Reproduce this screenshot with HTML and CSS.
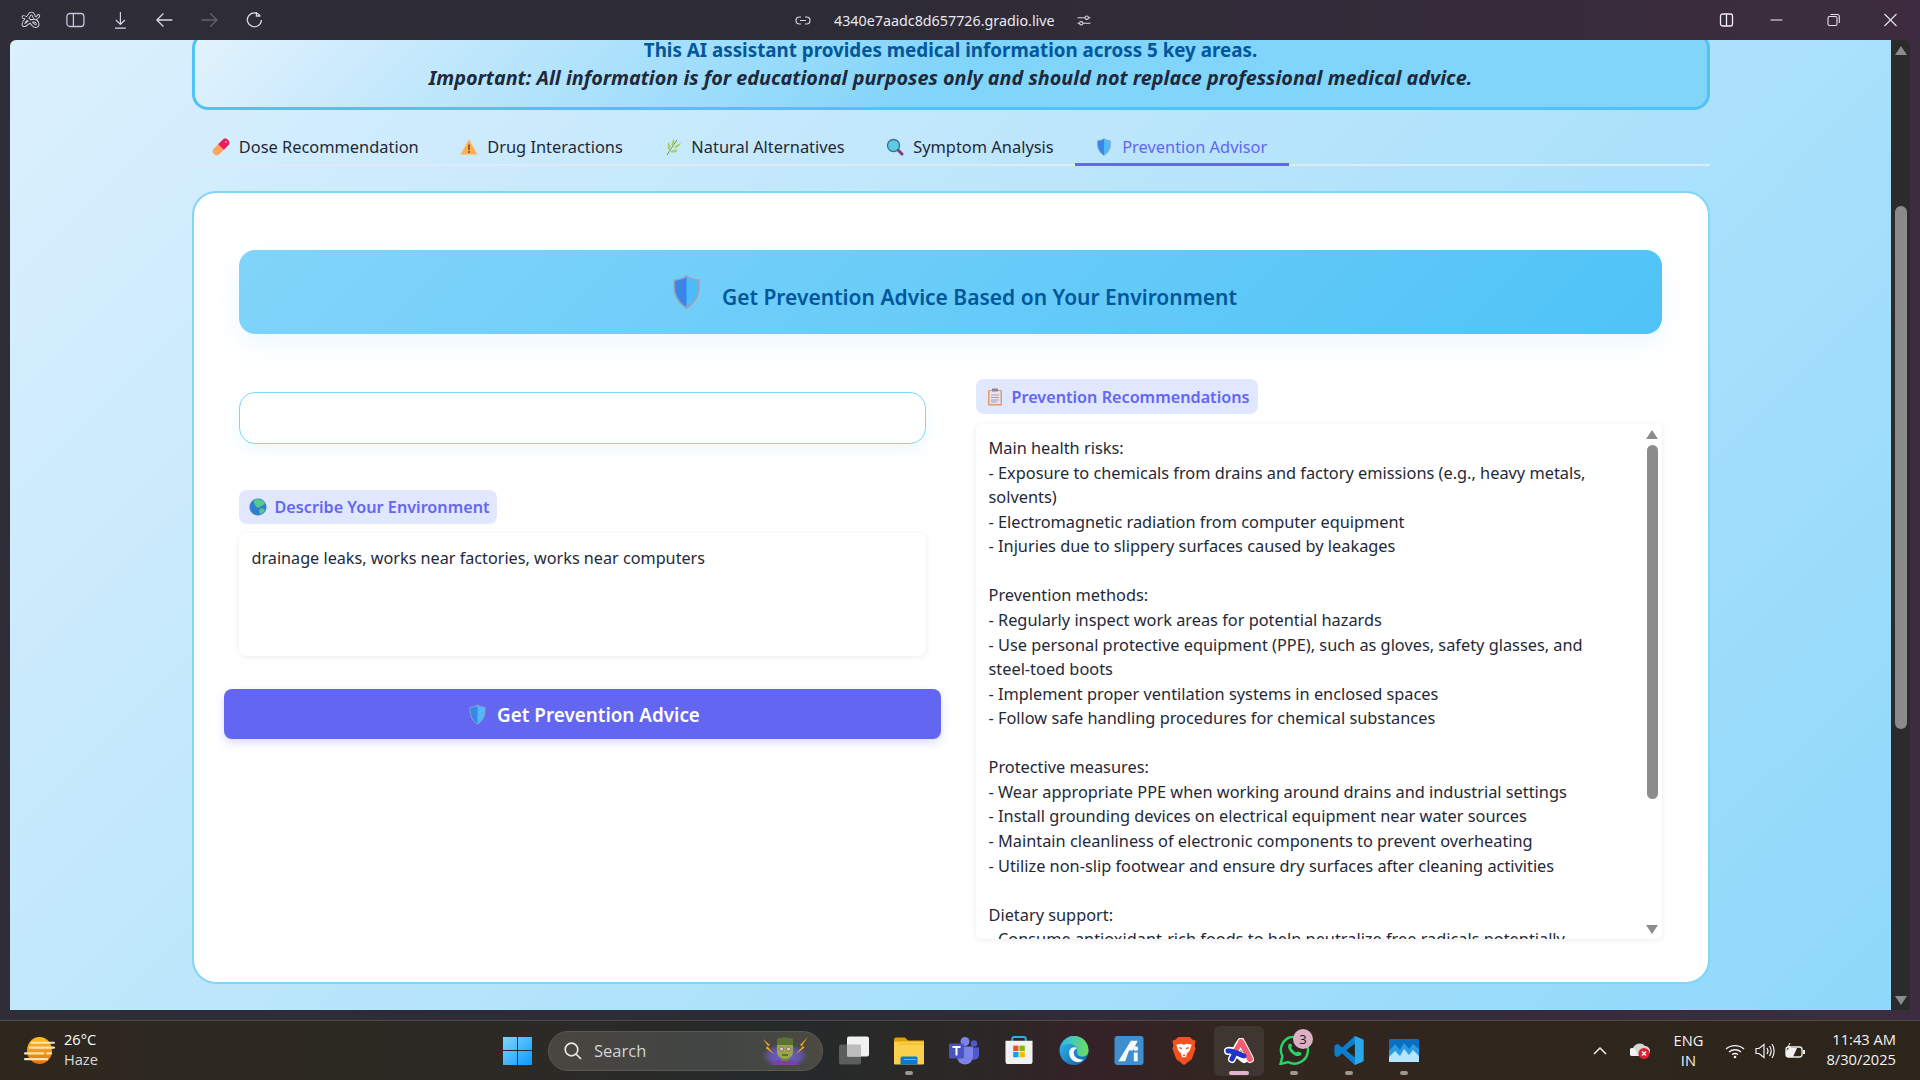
FILE: index.html
```html
<!DOCTYPE html>
<html lang="en">
<head>
    <meta charset="UTF-8"/>
    <title>Prevention Advisor</title>
    <link rel="stylesheet" href="styles.css">
</head>
<body>
<svg class="defs" width="0" height="0">
    <symbol id="shield" viewBox="0 0 28 34">
        <path d="M14 1C17 3.500 21 5 26 5C27.500 15 25 26 14 33C3 26 .5 15 2 5C7 5 11 3.500 14 1Z" fill="#4dbbfb" stroke="#9aa0b4" stroke-width="1.500"/>
        <path d="M14 2C11 4.200 7 5.500 2.800 5.700C1.500 15 3.800 25.500 14 32Z" fill="#3a86e8"/>
    </symbol>
</svg>

<header class="titlebar">
    <div class="bar-left">
        <svg class="bar-icon" viewBox="0 0 20 18" fill="none" stroke-linecap="round">
            <path d="M3 6C7 6 10 11 13 14C15 16 18 15 17 12C16 9 12 9 9 11C6 13 3 16 3 13C3 10 7 8 9 4C10 2 12 2 13 4C14 7 15 9 18 5" stroke="#dfe0ea" stroke-width="3.600"/>
            <path d="M3 6C7 6 10 11 13 14C15 16 18 15 17 12C16 9 12 9 9 11C6 13 3 16 3 13C3 10 7 8 9 4C10 2 12 2 13 4C14 7 15 9 18 5" stroke="#2e2d38" stroke-width="1.800"/>
        </svg>
        <svg class="bar-icon" viewBox="0 0 20 18" fill="none" stroke="#c4c7dc" stroke-width="1.300"><rect x="1.500" y="2.500" width="17" height="13" rx="3"/><path d="M8 2.500V15.500"/></svg>
        <svg class="bar-icon" viewBox="0 0 20 20" fill="none" stroke="#d6d8e8" stroke-width="1.300"><path d="M10 1V15M5 10L10 15L15 10M4 19H16"/></svg>
        <svg class="bar-icon" viewBox="0 0 20 18" fill="none" stroke="#d6d8e8" stroke-width="1.300"><path d="M18 9H3M9 2.500L2.500 9L9 15.500"/></svg>
        <svg class="bar-icon" viewBox="0 0 20 18" fill="none" stroke="#62636e" stroke-width="1.300"><path d="M2 9H17M11 2.500L17.500 9L11 15.500"/></svg>
        <svg class="bar-icon" viewBox="0 0 20 18" fill="none" stroke="#d6d8e8" stroke-width="1.300"><path d="M15.500 4.500A7 7 0 1 0 17 9M12 1V5H16"/></svg>
    </div>
    <div class="bar-url">
        <svg class="url-icon" viewBox="0 0 16 12" fill="none" stroke="#d6d8e8" stroke-width="1.200"><path d="M6 2.500H4.500A3.500 3.500 0 0 0 4.500 9.500H6M10 2.500H11.500A3.500 3.500 0 0 1 11.500 9.500H10M5 6H11"/></svg>
        <span class="url-text">4340e7aadc8d657726.gradio.live</span>
        <svg class="url-icon" viewBox="0 0 16 14" fill="none" stroke="#d6d8e8" stroke-width="1.200"><path d="M1 4H9M13 4H15M1 10H3M7 10H15"/><circle cx="11" cy="4" r="1.800"/><circle cx="5" cy="10" r="1.800"/></svg>
    </div>
    <div class="bar-right">
        <svg class="win-icon win-split" viewBox="0 0 14 14" fill="none" stroke="#f0eef4" stroke-width="1.300"><rect x="1" y="1" width="12" height="12" rx="2"/><path d="M7 1V13"/></svg>
        <svg class="win-icon" viewBox="0 0 14 14" fill="none" stroke="#e6e2ec" stroke-width="1.100"><path d="M1 7H13"/></svg>
        <svg class="win-icon" viewBox="0 0 14 14" fill="none" stroke="#e6e2ec" stroke-width="1.100"><rect x="1.500" y="3.500" width="9" height="9" rx="1.500"/><path d="M4 1.500H11A2 2 0 0 1 12.800 3.500V10"/></svg>
        <svg class="win-icon" viewBox="0 0 14 14" fill="none" stroke="#e6e2ec" stroke-width="1.100"><path d="M1 1L13 13M13 1L1 13"/></svg>
    </div>
</header>

<div class="viewport">
    <main class="page">
        <div class="content">
            <section class="intro">
                <p class="intro-main">This AI assistant provides medical information across 5 key areas.</p>
                <p class="intro-note">Important: All information is for educational purposes only and should not replace professional medical advice.</p>
            </section>

            <nav class="tabs">
                <button class="tab">
                    <svg class="tab-icon" viewBox="0 0 18 18"><g transform="rotate(45 9 9)"><rect x="5" y="-1" width="8" height="20" rx="4" fill="#ffa45e"/><path d="M5 9V3A4 4 0 0 1 13 3V9Z" fill="#e91e63"/></g><circle cx="14" cy="4" r="1" fill="#ff8fb5"/></svg>
                    Dose Recommendation
                </button>
                <button class="tab">
                    <svg class="tab-icon" viewBox="0 0 18 18"><path d="M9 1.500L17.500 16.500H.5Z" fill="#ffb04c"/><path d="M9 6.500V12" stroke="#5b3a1a" stroke-width="1.300"/><circle cx="9" cy="14" r=".9" fill="#5b3a1a"/></svg>
                    Drug Interactions
                </button>
                <button class="tab">
                    <svg class="tab-icon" viewBox="0 0 18 18"><path d="M3 17C6 12 9 8 13 2" stroke="#6a9a3a" fill="none"/><path d="M8 9C7 6 8 3 10 1C11 4 10 7 8 9ZM10 10C12 7 14 6 17 5C16 8 13 10 10 10ZM5 12C3 9 4 7 4 4C7 7 7 10 5 12ZM6 14C8 12 11 11 14 12C12 15 9 15 6 14Z" fill="#a6cf62"/></svg>
                    Natural Alternatives
                </button>
                <button class="tab">
                    <svg class="tab-icon" viewBox="0 0 18 18"><path d="M11 11L16 16" stroke="#7a3f80" stroke-width="3" stroke-linecap="round"/><circle cx="7.500" cy="7.500" r="6" fill="#5ecbe6" stroke="#3f6d8e" stroke-width="1.300"/></svg>
                    Symptom Analysis
                </button>
                <button class="tab tab-active">
                    <svg class="tab-icon" viewBox="0 0 28 34"><use href="#shield"/></svg>
                    Prevention Advisor
                </button>
            </nav>

            <section class="card">
                <h2 class="card-title">
                    <svg class="title-icon" viewBox="0 0 28 34"><use href="#shield"/></svg>
                    <span>Get Prevention Advice Based on Your Environment</span>
                </h2>
                <div class="columns">
                    <div class="col-left">
                        <input class="field" type="text" aria-label="Environment type">
                        <div class="label">
                            <svg class="label-icon" viewBox="0 0 18 18"><circle cx="9" cy="9" r="8.500" fill="#2f7fd0"/><path d="M6 1.500C10 .5 14 2 16 5C15 8 12 7 11 9C9 11 7 9 6 7C5 5 4 3 6 1.500ZM11 11C13 10 15 11 16 12C15 14 13 16 11 16C10 14 10 12 11 11Z" fill="#57c98a"/></svg>
                            Describe Your Environment
                        </div>
                        <div class="textbox">drainage leaks, works near factories, works near computers</div>
                        <button class="submit">
                            <svg class="submit-icon" viewBox="0 0 28 34"><use href="#shield"/></svg>
                            Get Prevention Advice
                        </button>
                    </div>
                    <div class="col-right">
                        <div class="label">
                            <svg class="label-icon" viewBox="0 0 16 18"><rect x="1" y="2" width="14" height="15.500" rx="1" fill="#e79a63"/><rect x="2.500" y="3" width="11" height="13" fill="#e9e4ee"/><path d="M4 7H12M4 9.500H12M4 12H12M4 14H10" stroke="#a59db6"/><rect x="5" y=".5" width="6" height="3" fill="#8b8794"/></svg>
                            Prevention Recommendations
                        </div>
                        <div class="output">
                            <div class="output-text">Main health risks:
- Exposure to chemicals from drains and factory emissions (e.g., heavy metals, solvents)
- Electromagnetic radiation from computer equipment
- Injuries due to slippery surfaces caused by leakages

Prevention methods:
- Regularly inspect work areas for potential hazards
- Use personal protective equipment (PPE), such as gloves, safety glasses, and steel-toed boots
- Implement proper ventilation systems in enclosed spaces
- Follow safe handling procedures for chemical substances

Protective measures:
- Wear appropriate PPE when working around drains and industrial settings
- Install grounding devices on electrical equipment near water sources
- Maintain cleanliness of electronic components to prevent overheating
- Utilize non-slip footwear and ensure dry surfaces after cleaning activities

Dietary support:
- Consume antioxidant-rich foods to help neutralize free radicals potentially</div>
                            <div class="inner-scroll">
                                <span class="arrow-up"></span>
                                <span class="inner-thumb"></span>
                                <span class="arrow-down"></span>
                            </div>
                        </div>
                    </div>
                </div>
            </section>
        </div>
    </main>
    <aside class="page-scroll">
        <span class="arrow-up"></span>
        <span class="page-thumb"></span>
        <span class="arrow-down"></span>
    </aside>
</div>

<footer class="taskbar">
    <div class="weather">
        <svg class="weather-icon" viewBox="0 0 32 28"><defs><linearGradient id="sun" x1="0" y1="0" x2="0" y2="1"><stop offset="0" stop-color="#ffc21a"/><stop offset="1" stop-color="#e8700c"/></linearGradient></defs><ellipse cx="16" cy="14" rx="13" ry="14" fill="url(#sun)"/><path d="M8 6H31M14 6H31M6 11H31M1 17H20M24 17H28M1 23H24" stroke="#f6e4b8" stroke-width="2.200" stroke-linecap="round"/></svg>
        <div class="weather-text">
            <span class="weather-temp">26°C</span>
            <span>Haze</span>
        </div>
    </div>

    <div class="slot">
        <svg class="start" viewBox="0 0 29 29"><defs><linearGradient id="winblue" x1="0" y1="0" x2="1" y2="1"><stop offset="0" stop-color="#7fd6f8"/><stop offset="1" stop-color="#0c98ff"/></linearGradient></defs><path d="M0 1H14V14H0ZM15 1H29V14H15ZM0 15H14V29H0ZM15 15H29V29H15Z" fill="url(#winblue)"/></svg>
    </div>

    <div class="search">
        <svg class="search-icon" viewBox="0 0 18 18" fill="none" stroke="#e6e6e6" stroke-width="1.700"><circle cx="7.500" cy="7.500" r="6.300"/><path d="M12 12L17 17"/></svg>
        <span class="search-text">Search</span>
        <svg class="search-art" viewBox="0 0 48 29">
            <defs><radialGradient id="glow"><stop offset="0" stop-color="#7a63e8"/><stop offset=".7" stop-color="#6f5bd8" stop-opacity=".6"/><stop offset="1" stop-color="#6f5bd8" stop-opacity="0"/></radialGradient></defs>
            <ellipse cx="24" cy="20" rx="23" ry="12" fill="url(#glow)"/>
            <path d="M10 29C11 25 16 24 24 24C32 24 37 25 38 29Z" fill="#7b3fa6"/>
            <rect x="20" y="19" width="8" height="6" fill="#6d8236"/>
            <path d="M16 8H32V16C32 20 28 23 24 23C20 23 16 20 16 16Z" fill="#93a94b"/>
            <path d="M16 9V3C19 1 29 1 32 3V9Z" fill="#5c7233"/>
            <circle cx="20.500" cy="13" r="2" fill="#dcd7c2" stroke="#a15f7a"/>
            <circle cx="27.500" cy="13" r="2" fill="#dcd7c2" stroke="#a15f7a"/>
            <path d="M21 19H27" stroke="#5a3a3a" stroke-width="1.200"/>
            <path d="M2 3L9 9L6.500 10.500L13 18L4.500 12L7 10ZM47 1L39 9L41.500 10.500L35 18L43.500 11.500L41 9.500Z" fill="#f5a623"/>
        </svg>
    </div>

    <div class="slot slot-first">
        <svg class="app" viewBox="0 0 30 28"><rect x="0" y="8" width="22" height="20" rx="2" fill="#5d5d5d"/><rect x="8" y="0" width="22" height="20" rx="2" fill="#f1f1f1"/><rect x="8" y="8" width="14" height="12" fill="#bcbcbc"/></svg>
    </div>
    <div class="slot slot-open">
        <svg class="app" viewBox="0 0 30 28"><path d="M0 3A2 2 0 0 1 2 1H11L14 4H30V10H0Z" fill="#e0a000"/><rect y="5" width="30" height="23" rx="1" fill="#fbd04a"/><path d="M5 7H30V8H5Z" fill="#e8b830"/><path d="M9 28V22A2 2 0 0 1 11 20H25A2 2 0 0 1 26 22V28Z" transform="translate(-2.500 0)" fill="#0a78d2"/><path d="M10 23H22" stroke="#66bdf4" stroke-width="1"/></svg>
    </div>
    <div class="slot">
        <svg class="app" viewBox="0 0 30 28"><circle cx="16" cy="5" r="4.500" fill="#7b83eb"/><circle cx="25" cy="7" r="3.200" fill="#5059c9"/><path d="M20 11H30V19A5 5 0 0 1 21 21Z" fill="#5059c9"/><path d="M8 10H24V20A8 8 0 0 1 8 20Z" fill="#7b83eb"/><rect y="7" width="15" height="15" rx="1.500" fill="#4b53bc"/><path d="M3.500 10.500H11.500M7.500 10.500V19" stroke="#fff" stroke-width="2"/></svg>
    </div>
    <div class="slot">
        <svg class="app" viewBox="0 0 30 30"><path d="M8 7V3A2 2 0 0 1 10 1H20A2 2 0 0 1 22 3V7" fill="none" stroke="#22b4e8" stroke-width="2"/><path d="M1 5H29V26A3 3 0 0 1 26 29H4A3 3 0 0 1 1 26Z" fill="#f2f2f2"/><rect x="9" y="10" width="5.500" height="5.500" fill="#f25022"/><rect x="15.500" y="10" width="5.500" height="5.500" fill="#7fba00"/><rect x="9" y="16.500" width="5.500" height="5.500" fill="#00a4ef"/><rect x="15.500" y="16.500" width="5.500" height="5.500" fill="#ffb900"/></svg>
    </div>
    <div class="slot">
        <svg class="app" viewBox="0 0 30 30"><defs><linearGradient id="edge" x1="0" y1="0" x2="1" y2="1"><stop offset="0" stop-color="#35c1f1"/><stop offset="1" stop-color="#0c59a4"/></linearGradient><linearGradient id="edge2" x1="0" y1="0" x2="1" y2="0"><stop offset="0" stop-color="#2bbfe8"/><stop offset="1" stop-color="#6fdc5c"/></linearGradient></defs><circle cx="15" cy="15" r="15" fill="url(#edge)"/><path d="M2 11C4 3 10 0 15 0C24 0 30 7 30 15C30 20 26 22 21 21C17 20 19 16 18 13C16 8 7 6 2 11Z" fill="url(#edge2)"/><path d="M10 17C10 12 16 10 18 13C16 14 14 15 15 19C16 23 21 25 25 24C21 30 10 27 10 17Z" fill="#f4f8fb"/></svg>
    </div>
    <div class="slot">
        <svg class="app" viewBox="0 0 30 30"><rect width="30" height="30" rx="3" fill="#3f8fd0"/><path d="M4 26L17 5H24L19 15H15L11 26ZM20 17H24V26H20Z" fill="#f6f9fc"/><circle cx="22" cy="13" r="2.500" fill="#f6f9fc"/></svg>
    </div>
    <div class="slot">
        <svg class="app app-brave" viewBox="0 0 26 30"><path d="M7 1H19L22 4L25 5L24 10L25 13L21 24L13 30L5 24L1 13L2 10L1 5L4 4Z" fill="#f4511e"/><path d="M5 9L10 8L13 9L16 8L21 9L19 15L16 18L15 22H11L10 18L7 15Z" fill="#fff"/><path d="M8 12L11 13M18 12L15 13M12 20H14" stroke="#f4511e" stroke-width="1.500"/></svg>
    </div>
    <div class="slot slot-active">
        <span class="active-tile">
            <svg class="app-arc" viewBox="0 0 30 26"><path d="M4 13C9 12 14 16 20 21" stroke="#fff" stroke-width="8" fill="none" stroke-linecap="round"/><path d="M8 21C11 14 14 8 17 4C20 9 23 15 26 21" stroke="#fff" stroke-width="8" fill="none" stroke-linecap="round"/><path d="M17 4C20 9 23 15 26 21" stroke="#ef5f6f" stroke-width="6" fill="none" stroke-linecap="round"/><path d="M8 21C11 14 14 8 17 4" stroke="#ef5f6f" stroke-width="5" fill="none" stroke-linecap="round"/><path d="M4 13C9 12 14 16 20 18M8 21L11 15" stroke="#1f34c8" stroke-width="5" fill="none" stroke-linecap="round"/></svg>
        </span>
    </div>
    <div class="slot slot-open">
        <svg class="app" viewBox="0 0 30 30"><path d="M1 29L3 21A14 14 0 1 1 9 27Z" fill="none" stroke="#25d366" stroke-width="2.500"/><path d="M10 8C8 10 9 14 12 17C15 20 19 22 22 20C23 19 23 18 22 17L19 16L17 17C15 16 13 14 12 12L13 10L12 8Z" fill="#25d366"/></svg>
        <span class="badge">3</span>
    </div>
    <div class="slot slot-open">
        <svg class="app" viewBox="0 0 30 30"><path d="M21 0L30 4V26L21 30L8 18L3 22L0 20V10L3 8L8 12Z" fill="#0a7fd0"/><path d="M21 0L30 4V26L21 30Z" fill="#29a8ee"/><path d="M21 8L12 15L21 22Z" fill="#2b2419"/></svg>
    </div>
    <div class="slot slot-open">
        <svg class="app" viewBox="0 0 30 23"><rect width="30" height="23" rx="1" fill="#0a6fc0"/><path d="M0 12L6 5L11 11L15 4L20 10L24 5L30 10V23H0Z" fill="#2b9ce2"/><path d="M0 18L6 12L11 17L15 10L20 16L24 11L30 17V23H0Z" fill="#b6e6fb"/></svg>
    </div>

    <div class="tray">
        <svg class="tray-chevron" viewBox="0 0 14 8" fill="none" stroke="#f0f0f0" stroke-width="1.500"><path d="M1 7L7 1L13 7"/></svg>
        <svg class="tray-cloud" viewBox="0 0 20 17"><path d="M3 14A4 4 0 0 1 3 6C5 1 12 0 15 4A5 5 0 0 1 15 14Z" fill="#d6d6d6"/><path d="M3 14A4 4 0 0 1 3 6C4 6 7 8 8 14Z" fill="#f2f2f2"/><circle cx="14" cy="11.500" r="5.500" fill="#e01f34"/><path d="M12 9.500L16 13.500M16 9.500L12 13.500" stroke="#fff" stroke-width="1.300"/></svg>
        <div class="tray-lang"><span>ENG</span><span>IN</span></div>
        <svg class="tray-icon" viewBox="0 0 20 15" fill="none" stroke="#f2f2f2" stroke-width="1.400"><path d="M1 5.500C6 1 14 1 19 5.500M4 8.500C7.500 5.500 12.500 5.500 16 8.500M7 11C8.800 9.800 11.200 9.800 13 11"/><circle cx="10" cy="13.500" r="1.300" fill="#f2f2f2" stroke="none"/></svg>
        <svg class="tray-icon" viewBox="0 0 20 16" fill="none" stroke="#f2f2f2" stroke-width="1.200"><path d="M1 5.500H4L9 1.500V14.500L4 10.500H1Z"/><path d="M12 5C13.200 6.800 13.200 9.200 12 11M14.500 3C16.500 6 16.500 10 14.500 13M17 1C19.800 5 19.800 11 17 15"/></svg>
        <svg class="tray-icon" viewBox="0 0 20 16" fill="none" stroke="#f2f2f2" stroke-width="1.300"><rect x="1" y="4" width="16" height="10" rx="2.500"/><path d="M19 7V11" stroke-width="2"/><path d="M1 14V8L4 5H12L8 14Z" fill="#f2f2f2" stroke="none"/><path d="M5 0L3 4H6L4 8" stroke-width="1"/></svg>
        <div class="tray-clock"><span>11:43 AM</span><span>8/30/2025</span></div>
    </div>
</footer>
</body>
</html>
```

FILE: styles.css
```css
* {
    margin: 0;
    padding: 0;
    box-sizing: border-box;
}

body {
    width: 1920px;
    height: 1080px;
    overflow: hidden;
    display: flex;
    flex-direction: column;
    font-family: 'Noto Sans', 'Open Sans', sans-serif;
    background: linear-gradient(90deg, #2e2d38 0%, #2d2b35 45%, #3d2c3f 100%);
}

.defs {
    position: absolute;
}

/* browser top bar */

.titlebar {
    height: 40px;
    flex: none;
    display: flex;
    align-items: center;
}

.bar-left {
    width: 795px;
    display: flex;
    align-items: center;
    padding-left: 8px;
}

.bar-icon {
    width: 44.800px;
    height: 18px;
    flex: none;
}

.bar-url {
    width: 297px;
    display: flex;
    align-items: center;
}

.url-icon {
    width: 16px;
    height: 13px;
    flex: none;
}

.url-text {
    width: 266px;
    padding-left: 23px;
    font-size: 14.300px;
    color: #e8e8f0;
}

.bar-right {
    display: flex;
    align-items: center;
    margin-left: 606px;
}

.win-icon {
    width: 57px;
    height: 14px;
    flex: none;
}

.win-split {
    margin-right: -7px;
}

/* page viewport */

.viewport {
    height: 970px;
    flex: none;
    margin: 0 10px;
    display: flex;
    border-radius: 6px 6px 0 0;
    overflow: hidden;
}

.page {
    flex: 1;
    overflow: hidden;
    background: linear-gradient(135deg, #e3f2fd 0%, #81d4fa 100%) 0 -280px / 1881px 1743px;
}

.content {
    width: 1518px;
    margin: -8px auto 0;
}

.intro {
    height: 78px;
    padding-top: 1px;
    text-align: center;
    border: 3px solid #4fc3f7;
    border-radius: 16px;
    background: linear-gradient(135deg, #e3f2fd 0%, #81d4fa 50%, #81d4fa 100%);
    line-height: 28px;
    font-weight: 700;
}

.intro-main {
    font-size: 18.800px;
    color: #01579b;
}

.intro-note {
    font-size: 19.800px;
    color: #1e293b;
    font-style: italic;
}

.tabs {
    height: 56px;
    display: flex;
    border-bottom: 2px solid #dcebf7;
}

.tab {
    height: 56px;
    padding: 25px 21.250px 0 20.250px;
    display: flex;
    align-items: flex-start;
    gap: 9px;
    border: 0;
    background: none;
    font-family: inherit;
    font-size: 16.400px;
    line-height: 24px;
    color: #1f2937;
}

.tab-active {
    color: #6366f1;
    border-bottom: 3px solid #6366f1;
}

.tab-icon {
    width: 18px;
    height: 18px;
    margin-top: 3px;
    flex: none;
}

.card {
    height: 793px;
    margin-top: 25px;
    padding: 57px 46px 0 45px;
    background: #fff;
    border: 2px solid #81d4fa;
    border-radius: 24px;
}

.card-title {
    height: 84px;
    padding-left: 9px;
    display: flex;
    align-items: center;
    justify-content: center;
    gap: 21px;
    border-radius: 16px;
    background: linear-gradient(135deg, #81d4fa 0%, #4fc3f7 100%);
    box-shadow: 0 8px 24px rgba(79, 195, 247, 0.12);
    font-size: 21px;
    font-weight: 600;
    color: #01579b;
}

.title-icon {
    width: 29px;
    height: 34px;
}

.card-title span {
    margin-top: 10px;
}

.columns {
    display: grid;
    grid-template-columns: 687px 686px;
    gap: 50px;
    margin-top: 45px;
}

.col-left {
    padding-top: 13px;
}

.field {
    display: block;
    width: 687px;
    height: 52px;
    border: 1px solid #81d4fa;
    border-radius: 16px;
    background: #fff;
    box-shadow: 0 6px 16px rgba(79, 195, 247, 0.1);
}

.label {
    display: inline-flex;
    align-items: center;
    gap: 8px;
    height: 34px;
    padding: 0 7px 0 10px;
    border-radius: 8px;
    background: #e0e7ff;
    font-size: 16.200px;
    font-weight: 600;
    color: #6366f1;
}

.col-left .label {
    margin-top: 46px;
}

.label-icon {
    width: 18px;
    height: 18px;
    flex: none;
}

.textbox {
    height: 123px;
    margin-top: 9px;
    padding: 13px 12px 13px 13px;
    border-radius: 8px;
    background: #fff;
    box-shadow: 0 1px 6px rgba(0, 0, 0, 0.08);
    font-size: 16.200px;
    line-height: 24.600px;
    color: #1f2937;
}

.submit {
    width: 717px;
    height: 50px;
    margin: 33px -15px 0;
    padding: 1px 0 0 5px;
    display: flex;
    align-items: center;
    justify-content: center;
    gap: 11px;
    border: 0;
    border-radius: 8px;
    background: #6366f1;
    box-shadow: 0 4px 10px rgba(99, 102, 241, 0.22);
    font-family: inherit;
    font-size: 18.850px;
    font-weight: 600;
    color: #fff;
}

.submit-icon {
    width: 17px;
    height: 21px;
}

.col-right .label {
    display: flex;
    width: 282px;
    height: 35px;
}

.output {
    position: relative;
    height: 515px;
    margin-top: 10px;
    overflow: hidden;
    border-radius: 6px;
    background: #fff;
    box-shadow: 0 1px 6px rgba(0, 0, 0, 0.08);
}

.output-text {
    padding: 12px 65px 0 13px;
    white-space: pre-wrap;
    font-size: 16.340px;
    line-height: 24.560px;
    color: #1f2937;
}

.inner-scroll {
    position: absolute;
    top: 0;
    right: 0;
    bottom: 0;
    width: 19px;
    padding: 6px 0 5px;
    display: flex;
    flex-direction: column;
    align-items: center;
    background: #fff;
}

.inner-thumb {
    width: 11px;
    height: 354px;
    margin-top: 6px;
    border-radius: 6px;
    background: #8c8c8c;
}

.inner-scroll .arrow-down {
    margin-top: auto;
}

.arrow-up {
    width: 0;
    height: 0;
    border: 6px solid transparent;
    border-top: 0;
    border-bottom: 9px solid #8c8c8c;
}

.arrow-down {
    width: 0;
    height: 0;
    border: 6px solid transparent;
    border-bottom: 0;
    border-top: 9px solid #8c8c8c;
}

.page-scroll {
    width: 19px;
    flex: none;
    padding: 6px 0 5px;
    display: flex;
    flex-direction: column;
    align-items: center;
    background: #2b2b2b;
}

.page-thumb {
    width: 12px;
    height: 523px;
    margin-top: 151px;
    border-radius: 6px;
    background: #8a8a8a;
}

.page-scroll .arrow-down {
    margin-top: auto;
}

/* windows taskbar */

.taskbar {
    height: 60px;
    flex: none;
    margin-top: 10px;
    display: flex;
    align-items: center;
    position: relative;
    border-top: 1px solid #4e4a46;
    background: linear-gradient(90deg, #2e271e 0%, #2b2a26 30%, #252a2b 40%, #2b2826 50%, #352228 57%, #32261f 65%, #2c251b 100%);
    color: #f2f2f2;
    font-family: 'Open Sans', 'Noto Sans', sans-serif;
}

.weather {
    width: 490px;
    display: flex;
    align-items: center;
    gap: 9px;
    padding-left: 24px;
}

.weather-icon {
    width: 31px;
    height: 27px;
}

.weather-text {
    display: flex;
    flex-direction: column;
    margin-top: -3px;
    font-size: 14.600px;
    line-height: 20px;
    color: #d8d8d8;
}

.weather-temp {
    color: #fff;
}

.slot {
    width: 55px;
    height: 59px;
    flex: none;
    position: relative;
    display: flex;
    align-items: center;
    justify-content: center;
}

.start {
    width: 29px;
    height: 29px;
}

.search {
    width: 275px;
    height: 40px;
    flex: none;
    margin-left: 3px;
    padding: 0 13px 0 15px;
    display: flex;
    align-items: center;
    border: 1px solid #5a5854;
    border-radius: 20px;
    background: linear-gradient(90deg, #4a4540 0%, #414543 60%, #4a4a42 100%);
}

.search-icon {
    width: 18px;
    height: 18px;
    flex: none;
}

.search-text {
    margin-left: 12px;
    font-size: 16.500px;
    color: #d4d4d4;
}

.search-art {
    width: 48px;
    height: 29px;
    margin-left: auto;
}

.slot-first {
    margin-left: 3px;
}

.app {
    width: 30px;
    height: 29px;
}

.app-brave {
    width: 26px;
}

.slot-open::after,
.slot-active::after {
    content: '';
    position: absolute;
    bottom: 5px;
    left: 50%;
    width: 8px;
    height: 4px;
    margin-left: -4px;
    border-radius: 2px;
    background: #9a9690;
}

.slot-active::after {
    width: 20px;
    margin-left: -10px;
    background: #e2b3cb;
}

.active-tile {
    width: 50px;
    height: 50px;
    display: flex;
    align-items: center;
    justify-content: center;
    border-radius: 6px;
    background: #3e3730;
}

.app-arc {
    width: 30px;
    height: 26px;
}

.badge {
    position: absolute;
    top: 8px;
    right: 8px;
    width: 20px;
    height: 20px;
    border-radius: 50%;
    background: #dbb0c6;
    color: #1d1a1c;
    font-size: 13px;
    line-height: 20px;
    text-align: center;
}

.tray {
    margin-left: auto;
    padding-right: 24px;
    display: flex;
    align-items: center;
    font-size: 14px;
}

.tray-chevron {
    width: 14px;
    height: 8px;
}

.tray-cloud {
    width: 20px;
    height: 17px;
    margin-left: 23px;
}

.tray-lang {
    width: 38px;
    margin-left: 19px;
    display: flex;
    flex-direction: column;
    align-items: center;
    margin-top: -1px;
    font-size: 14.700px;
    line-height: 20px;
}

.tray-icon {
    width: 20px;
    height: 16px;
    margin-left: 10px;
}

.tray-lang + .tray-icon {
    margin-left: 18px;
}

.tray-clock {
    margin-left: 21px;
    margin-top: -3px;
    display: flex;
    flex-direction: column;
    align-items: flex-end;
    font-size: 14.700px;
    line-height: 20px;
}
```
